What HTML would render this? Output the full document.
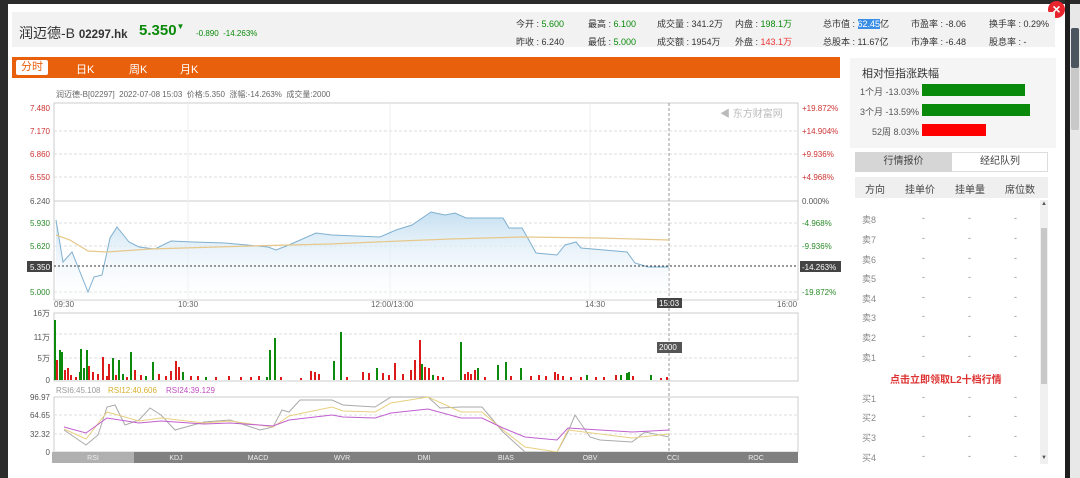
<!DOCTYPE html>
<html><head><meta charset="utf-8"><style>
*{margin:0;padding:0;box-sizing:border-box}
body{width:1080px;height:478px;overflow:hidden;background:#fff;font-family:"Liberation Sans","Noto Sans CJK SC",sans-serif;position:relative}
.abs{position:absolute}
.hd{left:12px;top:12px;width:1043px;height:35px;background:#f2f2f2}
.st{font-size:9px;color:#333;white-space:nowrap}
.g{color:#0a8a0a}.r{color:#e33}
.tabs{left:12px;top:57px;width:828px;height:21px;background:#e8600c}
.tabs span{position:absolute;top:4px;color:#fff;font-size:11px}
.rp{font-size:9px;color:#555}
.row{position:absolute;left:862px;font-size:9px;color:#888;width:170px}
.row b{font-weight:normal;position:absolute}
</style></head><body>
<div class="abs" style="left:0;top:0;width:1080px;height:4px;background:#2b2b2b"></div>
<div class="abs" style="left:0;top:0;width:8px;height:478px;background:#2b2b2b"></div>
<div class="abs" style="left:1065px;top:0;width:5px;height:478px;background:#1e1e1e"></div>
<div class="abs" style="left:1070px;top:4px;width:10px;height:474px;background:#e8e8e8"></div>
<div class="abs" style="left:1071px;top:28px;width:8px;height:102px;background:#c8c8c8;border-radius:2px"></div>
<div class="abs" style="left:1071px;top:28px;width:8px;height:40px;background:#4a5560;border-radius:2px"></div>
<div class="abs" style="left:1048px;top:1px;width:17px;height:17px;border-radius:50%;background:#e8242c;color:#fff;font-size:14px;line-height:16px;text-align:center;font-weight:bold">×</div>

<div class="abs hd"></div>
<div class="abs" style="left:19px;top:23px;font-size:14px;color:#333;white-space:nowrap">润迈德-B <b style="font-size:11.5px">02297.hk</b></div>
<div class="abs g" style="left:139px;top:22px;font-size:15px;font-weight:bold">5.350<span style="font-size:8px;vertical-align:top">▼</span></div>
<div class="abs g" style="left:196px;top:29px;font-size:8px">-0.890 &nbsp;-14.263%</div>

<div class="abs st" style="left:516px;top:17px">今开 : <span class="g">5.600</span></div>
<div class="abs st" style="left:516px;top:35px">昨收 : 6.240</div>
<div class="abs st" style="left:588px;top:17px">最高 : <span class="g">6.100</span></div>
<div class="abs st" style="left:588px;top:35px">最低 : <span class="g">5.000</span></div>
<div class="abs st" style="left:657px;top:17px">成交量 : 341.2万</div>
<div class="abs st" style="left:657px;top:35px">成交额 : 1954万</div>
<div class="abs st" style="left:735px;top:17px">内盘 : <span class="g">198.1万</span></div>
<div class="abs st" style="left:735px;top:35px">外盘 : <span class="r">143.1万</span></div>
<div class="abs st" style="left:823px;top:17px">总市值 : <span style="background:#3a8ee6;color:#fff">62.45</span>亿</div>
<div class="abs st" style="left:823px;top:35px">总股本 : 11.67亿</div>
<div class="abs st" style="left:911px;top:17px">市盈率 : -8.06</div>
<div class="abs st" style="left:911px;top:35px">市净率 : -6.48</div>
<div class="abs st" style="left:989px;top:17px">换手率 : 0.29%</div>
<div class="abs st" style="left:989px;top:35px">股息率 : -</div>

<div class="abs tabs">
<span style="left:4px;top:3px;background:#fff;color:#e8600c;padding:0 5px;height:15px;line-height:15px;border-radius:2px">分时</span>
<span style="left:64px">日K</span><span style="left:117px">周K</span><span style="left:168px">月K</span>
</div>

<div class="abs" style="left:56px;top:89px;font-size:8px;color:#666">润迈德-B[02297] &nbsp;2022-07-08 15:03 &nbsp;价格:5.350 &nbsp;涨幅:-14.263% &nbsp;成交量:2000</div>

<svg class="abs" style="left:0;top:0" width="850" height="478" font-family="Liberation Sans" font-size="8">
<defs><linearGradient id="ga" x1="0" y1="0" x2="0" y2="1"><stop offset="0" stop-color="#c6e0f2"/><stop offset="1" stop-color="#fff" stop-opacity="0.2"/></linearGradient></defs>
<rect x="54" y="103" width="744" height="197" fill="none" stroke="#ccc"/>
<g stroke="#ddd" stroke-dasharray="3,2">
<line x1="54" y1="131" x2="798" y2="131"/><line x1="54" y1="154" x2="798" y2="154"/><line x1="54" y1="177" x2="798" y2="177"/><line x1="54" y1="223" x2="798" y2="223"/><line x1="54" y1="246" x2="798" y2="246"/><line x1="54" y1="292" x2="798" y2="292"/></g>
<line x1="54" y1="201" x2="798" y2="201" stroke="#ccc"/>
<line x1="188" y1="103" x2="188" y2="300" stroke="#eee"/><line x1="390" y1="103" x2="390" y2="300" stroke="#eee"/><line x1="590" y1="103" x2="590" y2="300" stroke="#eee"/>
<line x1="669" y1="103" x2="669" y2="463" stroke="#999" stroke-dasharray="3,2"/>
<path d="M56,220L63,262L72,252L80,272L88,292L94,277L102,275L110,238L117,227L129,242L139,247L155,249L171,241L193,242L225,243L268,247L276,250L289,245L316,233L332,235L380,237L396,230L412,225L431,212L445,215L455,213L466,218L503,218L509,228L522,228L530,242L536,253L557,255L565,245L576,242L581,248L627,252L635,263L648,267L669,267L669,300L56,300Z" fill="url(#ga)"/>
<path d="M56,220L63,262L72,252L80,272L88,292L94,277L102,275L110,238L117,227L129,242L139,247L155,249L171,241L193,242L225,243L268,247L276,250L289,245L316,233L332,235L380,237L396,230L412,225L431,212L445,215L455,213L466,218L503,218L509,228L522,228L530,242L536,253L557,255L565,245L576,242L581,248L627,252L635,263L648,267L669,267" fill="none" stroke="#7fb0cf" stroke-width="1"/>
<path d="M56,235L70,240L88,251L107,252L150,249L250,246L330,244L400,241L450,239L522,237L600,238L669,240" fill="none" stroke="#e6c88a" stroke-width="1.2"/>
<line x1="54" y1="266" x2="798" y2="266" stroke="#333" stroke-dasharray="2,2"/>
<g fill="#c33"><text x="50" y="111" text-anchor="end">7.480</text><text x="50" y="134" text-anchor="end">7.170</text><text x="50" y="157" text-anchor="end">6.860</text><text x="50" y="180" text-anchor="end">6.550</text></g>
<text x="50" y="204" text-anchor="end" fill="#555">6.240</text>
<g fill="#2a8a2a"><text x="50" y="226" text-anchor="end">5.930</text><text x="50" y="249" text-anchor="end">5.620</text><text x="50" y="295" text-anchor="end">5.000</text></g>
<rect x="27" y="261" width="25" height="11" fill="#444"/><text x="30" y="270" fill="#fff">5.350</text>
<g fill="#c33"><text x="802" y="111">+19.872%</text><text x="802" y="134">+14.904%</text><text x="802" y="157">+9.936%</text><text x="802" y="180">+4.968%</text></g>
<text x="802" y="204" fill="#555">0.000%</text>
<g fill="#2a8a2a"><text x="802" y="226">-4.968%</text><text x="802" y="249">-9.936%</text><text x="802" y="295">-19.872%</text></g>
<rect x="800" y="261" width="41" height="11" fill="#444"/><text x="802" y="270" fill="#fff">-14.263%</text>
<text x="720" y="117" fill="#bbb" font-size="10">◀ 东方财富网</text>
<g fill="#666"><text x="54" y="307">09:30</text><text x="178" y="307">10:30</text><text x="371" y="307">12:00/13:00</text><text x="585" y="307">14:30</text><text x="777" y="307">16:00</text></g>
<rect x="657" y="298" width="25" height="10" fill="#444"/><text x="659" y="306" fill="#fff">15:03</text>

<rect x="54" y="313" width="744" height="68" fill="none" stroke="#ccc"/>
<g stroke="#ddd" stroke-dasharray="3,2"><line x1="54" y1="334" x2="798" y2="334"/><line x1="54" y1="358" x2="798" y2="358"/></g>
<g fill="#555" text-anchor="end"><text x="50" y="316">16万</text><text x="50" y="340">11万</text><text x="50" y="361">5万</text><text x="50" y="383">0</text></g>
<rect x="657" y="342" width="25" height="11" fill="#555"/><text x="659" y="350" fill="#fff">2000</text>
<g fill="#0b8a0b">
<rect x="54" y="320" width="2" height="60"/><rect x="59" y="350" width="2" height="30"/><rect x="61" y="352" width="2" height="28"/><rect x="79" y="372" width="2" height="8"/><rect x="80" y="349" width="2" height="31"/><rect x="83" y="368" width="2" height="12"/><rect x="86" y="350" width="2" height="30"/><rect x="112" y="358" width="2" height="22"/><rect x="118" y="360" width="2" height="20"/><rect x="122" y="374" width="2" height="6"/><rect x="130" y="352" width="2" height="28"/><rect x="145" y="376" width="2" height="4"/><rect x="152" y="362" width="2" height="18"/><rect x="182" y="372" width="2" height="8"/><rect x="205" y="377" width="2" height="3"/><rect x="266" y="377" width="2" height="3"/><rect x="269" y="350" width="2" height="30"/><rect x="274" y="338" width="2" height="42"/><rect x="333" y="361" width="2" height="19"/><rect x="340" y="332" width="2" height="48"/><rect x="376" y="368" width="2" height="12"/><rect x="421" y="364" width="2" height="16"/><rect x="432" y="375" width="2" height="5"/><rect x="460" y="342" width="2" height="38"/><rect x="477" y="368" width="2" height="12"/><rect x="497" y="365" width="2" height="15"/><rect x="505" y="362" width="2" height="18"/><rect x="520" y="368" width="2" height="12"/><rect x="586" y="375" width="2" height="5"/><rect x="620" y="375" width="2" height="5"/><rect x="626" y="373" width="2" height="7"/><rect x="628" y="372" width="2" height="8"/><rect x="650" y="375" width="2" height="5"/>
</g>
<g fill="#dd1a1a">
<rect x="56" y="360" width="2" height="20"/><rect x="64" y="370" width="2" height="10"/><rect x="67" y="368" width="2" height="12"/><rect x="70" y="375" width="2" height="5"/><rect x="75" y="377" width="2" height="3"/><rect x="88" y="366" width="2" height="14"/><rect x="92" y="372" width="2" height="8"/><rect x="97" y="374" width="2" height="6"/><rect x="102" y="357" width="2" height="23"/><rect x="106" y="376" width="2" height="4"/><rect x="108" y="364" width="2" height="16"/><rect x="115" y="375" width="2" height="5"/><rect x="126" y="377" width="2" height="3"/><rect x="134" y="370" width="2" height="10"/><rect x="140" y="375" width="2" height="5"/><rect x="158" y="374" width="2" height="6"/><rect x="165" y="376" width="2" height="4"/><rect x="170" y="371" width="2" height="9"/><rect x="175" y="361" width="2" height="19"/><rect x="178" y="367" width="2" height="13"/><rect x="190" y="376" width="2" height="4"/><rect x="197" y="376" width="2" height="4"/><rect x="215" y="377" width="2" height="3"/><rect x="228" y="376" width="2" height="4"/><rect x="240" y="377" width="2" height="3"/><rect x="250" y="377" width="2" height="3"/><rect x="258" y="376" width="2" height="4"/><rect x="280" y="377" width="2" height="3"/><rect x="300" y="378" width="2" height="2"/><rect x="310" y="371" width="2" height="9"/><rect x="314" y="372" width="2" height="8"/><rect x="318" y="374" width="2" height="6"/><rect x="346" y="377" width="2" height="3"/><rect x="362" y="372" width="2" height="8"/><rect x="368" y="373" width="2" height="7"/><rect x="382" y="373" width="2" height="7"/><rect x="388" y="375" width="2" height="5"/><rect x="394" y="363" width="2" height="17"/><rect x="402" y="374" width="2" height="6"/><rect x="410" y="370" width="2" height="10"/><rect x="414" y="360" width="2" height="20"/><rect x="419" y="340" width="2" height="40"/><rect x="424" y="367" width="2" height="13"/><rect x="428" y="368" width="2" height="12"/><rect x="437" y="376" width="2" height="4"/><rect x="442" y="377" width="2" height="3"/><rect x="464" y="374" width="2" height="6"/><rect x="467" y="372" width="2" height="8"/><rect x="470" y="374" width="2" height="6"/><rect x="474" y="370" width="2" height="10"/><rect x="484" y="377" width="2" height="3"/><rect x="510" y="376" width="2" height="4"/><rect x="530" y="376" width="2" height="4"/><rect x="538" y="375" width="2" height="5"/><rect x="545" y="376" width="2" height="4"/><rect x="554" y="372" width="2" height="8"/><rect x="557" y="374" width="2" height="6"/><rect x="562" y="376" width="2" height="4"/><rect x="570" y="377" width="2" height="3"/><rect x="580" y="377" width="2" height="3"/><rect x="595" y="377" width="2" height="3"/><rect x="603" y="377" width="2" height="3"/><rect x="615" y="375" width="2" height="5"/><rect x="632" y="376" width="2" height="4"/><rect x="660" y="378" width="2" height="2"/><rect x="666" y="377" width="2" height="3"/>
</g>

<text x="56" y="393" fill="#999">RSI6:45.108</text><text x="108" y="393" fill="#d8b030">RSI12:40.606</text><text x="166" y="393" fill="#c050c0">RSI24:39.129</text>
<rect x="54" y="397" width="744" height="55" fill="none" stroke="#ccc"/>
<g stroke="#ddd" stroke-dasharray="3,2"><line x1="54" y1="415" x2="798" y2="415"/><line x1="54" y1="434" x2="798" y2="434"/></g>
<g fill="#555" text-anchor="end"><text x="50" y="400">96.97</text><text x="50" y="418">64.65</text><text x="50" y="437">32.32</text><text x="50" y="455">0</text></g>
<polyline fill="none" stroke="#aaa" points="64,430 86,445 98,435 107,407 115,405 125,425 139,420 150,408 161,415 175,430 204,422 230,420 260,430 273,427 282,410 289,412 300,400 332,400 343,405 375,407 391,397 428,397 440,408 461,407 482,407 503,432 525,452 557,452 568,432 575,415 590,437 600,440 632,442 645,432 669,437"/>
<polyline fill="none" stroke="#e8d080" points="64,429 86,439 107,412 139,421 161,418 204,423 230,421 273,427 289,416 332,407 343,411 375,412 391,403 428,397 461,412 482,412 503,430 525,447 557,452 568,430 600,434 632,438 669,434"/>
<polyline fill="none" stroke="#c060d0" points="64,427 86,433 107,418 139,423 161,421 204,424 230,423 273,426 289,420 332,415 343,417 375,418 391,413 428,409 461,418 482,418 503,428 525,437 557,440 568,428 600,430 632,432 669,430"/>
<rect x="52" y="452" width="746" height="11" fill="#808080"/><rect x="52" y="452" width="82" height="11" fill="#b0b0b0"/>
<g fill="#eee" font-size="7" text-anchor="middle"><text x="93" y="460">RSI</text><text x="176" y="460">KDJ</text><text x="258" y="460">MACD</text><text x="342" y="460">WVR</text><text x="424" y="460">DMI</text><text x="506" y="460">BIAS</text><text x="590" y="460">OBV</text><text x="673" y="460">CCI</text><text x="756" y="460">ROC</text></g>
</svg>

<div class="abs" style="left:850px;top:58px;width:206px;height:90px;background:#f5f5f5"></div>
<div class="abs" style="left:862px;top:65px;font-size:11px;color:#333">相对恒指涨跌幅</div>
<div class="abs rp" style="left:860px;top:85px">1个月 -13.03%</div>
<div class="abs" style="left:922px;top:84px;width:103px;height:12px;background:#0a8a0a"></div>
<div class="abs rp" style="left:860px;top:105px">3个月 -13.59%</div>
<div class="abs" style="left:922px;top:104px;width:108px;height:12px;background:#0a8a0a"></div>
<div class="abs rp" style="left:872px;top:125px">52周 8.03%</div>
<div class="abs" style="left:922px;top:124px;width:64px;height:12px;background:#f00"></div>

<div class="abs" style="left:855px;top:152px;width:193px;height:20px;border:1px solid #ddd;background:#fff"></div>
<div class="abs" style="left:855px;top:152px;width:97px;height:20px;background:#d6d6d6;font-size:10px;color:#444;text-align:center;line-height:20px">行情报价</div>
<div class="abs" style="left:952px;top:152px;width:96px;height:20px;font-size:10px;color:#444;text-align:center;line-height:20px">经纪队列</div>
<div class="abs" style="left:855px;top:177px;width:193px;height:21px;background:#efefef;font-size:10px;color:#444">
<span class="abs" style="left:10px;top:4px">方向</span><span class="abs" style="left:50px;top:4px">挂单价</span><span class="abs" style="left:100px;top:4px">挂单量</span><span class="abs" style="left:150px;top:4px">席位数</span></div>
<div class="abs" style="left:1040px;top:200px;width:8px;height:264px;background:#f0f0f0"></div>
<div class="abs" style="left:1041px;top:228px;width:6px;height:156px;background:#c8c8c8"></div>
<div class="abs" style="left:1041px;top:201px;font-size:6px;color:#555">▲</div>
<div class="abs" style="left:1041px;top:455px;font-size:6px;color:#555">▼</div>

<div class="row" style="top:213px"><b style="left:0">卖8</b><b style="left:60px">-</b><b style="left:106px">-</b><b style="left:152px">-</b></div>
<div class="row" style="top:233px"><b style="left:0">卖7</b><b style="left:60px">-</b><b style="left:106px">-</b><b style="left:152px">-</b></div>
<div class="row" style="top:253px"><b style="left:0">卖6</b><b style="left:60px">-</b><b style="left:106px">-</b><b style="left:152px">-</b></div>
<div class="row" style="top:272px"><b style="left:0">卖5</b><b style="left:60px">-</b><b style="left:106px">-</b><b style="left:152px">-</b></div>
<div class="row" style="top:292px"><b style="left:0">卖4</b><b style="left:60px">-</b><b style="left:106px">-</b><b style="left:152px">-</b></div>
<div class="row" style="top:311px"><b style="left:0">卖3</b><b style="left:60px">-</b><b style="left:106px">-</b><b style="left:152px">-</b></div>
<div class="row" style="top:331px"><b style="left:0">卖2</b><b style="left:60px">-</b><b style="left:106px">-</b><b style="left:152px">-</b></div>
<div class="row" style="top:351px"><b style="left:0">卖1</b><b style="left:60px">-</b><b style="left:106px">-</b><b style="left:152px">-</b></div>
<div class="abs" style="left:890px;top:371px;font-size:10px;color:#d33;font-weight:bold">点击立即领取L2十档行情</div>
<div class="row" style="top:392px"><b style="left:0">买1</b><b style="left:60px">-</b><b style="left:106px">-</b><b style="left:152px">-</b></div>
<div class="row" style="top:411px"><b style="left:0">买2</b><b style="left:60px">-</b><b style="left:106px">-</b><b style="left:152px">-</b></div>
<div class="row" style="top:431px"><b style="left:0">买3</b><b style="left:60px">-</b><b style="left:106px">-</b><b style="left:152px">-</b></div>
<div class="row" style="top:451px"><b style="left:0">买4</b><b style="left:60px">-</b><b style="left:106px">-</b><b style="left:152px">-</b></div>
</body></html>
